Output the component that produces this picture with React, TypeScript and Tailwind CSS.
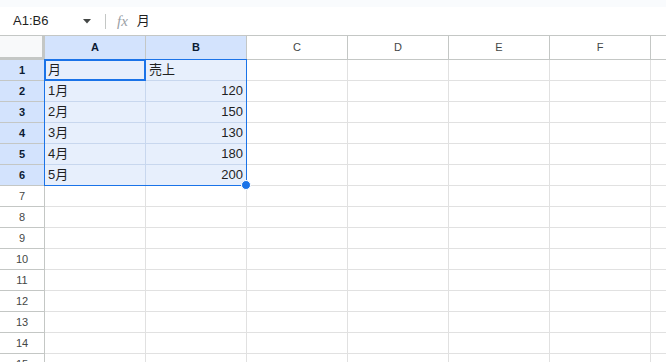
import React from "react";

const COLS = ["A", "B", "C", "D", "E", "F", "G"];
const data: Record<number, [string, string]> = {
  1: ["月", "売上"],
  2: ["1月", "120"],
  3: ["2月", "150"],
  4: ["3月", "130"],
  5: ["4月", "180"],
  6: ["5月", "200"],
};

export default function App() {
  const rows = Array.from({ length: 15 }, (_, i) => i + 1);
  return (
    <div
      className="w-[666px] h-[362px] overflow-hidden bg-white relative"
      style={{ fontFamily: '"Liberation Sans", Arial, "Noto Sans CJK JP", sans-serif' }}
    >
      <div className="h-[7px] bg-[#f9fbfd]" />
      <div className="h-[29px] flex items-center border-b border-[#c4c7c5] text-[13px] text-[#1f1f1f]">
        <div className="w-[105px] flex items-center pl-[13px] pr-[12px]">
          <span className="flex-1">A1:B6</span>
          <svg width="8" height="5" viewBox="0 0 8 5" className="mr-[2px]">
            <path d="M0 0 L8 0 L4 4.5 Z" fill="#444746" />
          </svg>
        </div>
        <div className="w-px h-[15px] bg-[#c4c7c5]" />
        <span
          className="ml-[11px] text-[15px] italic text-[#9aa0a6]"
          style={{ fontFamily: '"Liberation Serif", serif' }}
        >
          fx
        </span>
        <span className="ml-[9px]">月</span>
      </div>
      {/* header row */}
      <div className="flex h-[24px] border-b border-[#c4c7c5] text-[11px]">
        <div className="w-[45px] shrink-0 bg-[#f8f9fa] border-r-[3px] border-b-[2px] border-[#c4c7c5]" />
        {COLS.map((c) => {
          const sel = c === "A" || c === "B";
          return (
            <div
              key={c}
              className={
                "w-[101px] shrink-0 flex items-center justify-center border-r border-[#c4c7c5] " +
                (sel ? "bg-[#d3e3fd] font-bold text-[#0b1b33]" : "text-[#444746]")
              }
            >
              {c === "G" ? "" : c}
            </div>
          );
        })}
      </div>
      {rows.map((r) => {
        const sel = r <= 6;
        const d = data[r];
        return (
          <div key={r} className="flex h-[21px] text-[13px]">
            <div
              className={
                "w-[45px] shrink-0 flex items-center justify-center text-[11px] border-r border-b border-[#c4c7c5] " +
                (sel ? "bg-[#d3e3fd] font-bold text-[#0b1b33]" : "text-[#444746]")
              }
            >
              {r}
            </div>
            {COLS.map((c, ci) => {
              const inSel = sel && ci < 2;
              const val = d && ci < 2 ? d[ci] : "";
              const numeric = /^\d+$/.test(val);
              return (
                <div
                  key={c}
                  className={
                    "w-[101px] shrink-0 flex items-center px-[3px] border-r border-b " +
                    (inSel ? "bg-[#e7effc] border-[#c8d7ee] text-[#1f1f1f] " : "border-[#e1e1e1] ") +
                    (numeric ? "justify-end" : "")
                  }
                >
                  {val}
                </div>
              );
            })}
          </div>
        );
      })}
      {/* selection range border */}
      <div className="absolute left-[44px] top-[59px] w-[203px] h-[127px] border border-[#1a73e8] pointer-events-none" />
      {/* active cell */}
      <div className="absolute left-[44px] top-[59px] w-[102px] h-[22px] border-2 border-[#1a73e8] pointer-events-none" />
      {/* fill handle */}
      <div className="absolute left-[241px] top-[180px] w-[10px] h-[10px] rounded-full bg-[#1a73e8] border border-white" />
    </div>
  );
}
